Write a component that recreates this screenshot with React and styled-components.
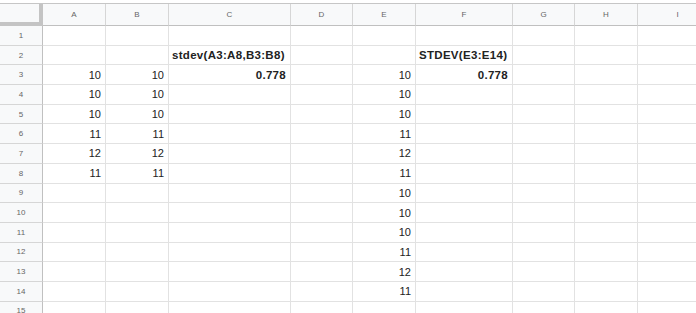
import styled, { createGlobalStyle } from "styled-components";

const GlobalStyle = createGlobalStyle`
  html, body {
    margin: 0;
    padding: 0;
    background: #fff;
  }
  body {
    font-family: "Liberation Sans", Arial, sans-serif;
  }
`;

const columns = [
  { name: "A", width: 63 },
  { name: "B", width: 63 },
  { name: "C", width: 122 },
  { name: "D", width: 62 },
  { name: "E", width: 63 },
  { name: "F", width: 97 },
  { name: "G", width: 62 },
  { name: "H", width: 63 },
  { name: "I", width: 80 },
];

const cells = {
  "A3": { v: "10" }, "B3": { v: "10" },
  "A4": { v: "10" }, "B4": { v: "10" },
  "A5": { v: "10" }, "B5": { v: "10" },
  "A6": { v: "11" }, "B6": { v: "11" },
  "A7": { v: "12" }, "B7": { v: "12" },
  "A8": { v: "11" }, "B8": { v: "11" },
  "C2": { v: "stdev(A3:A8,B3:B8)", bold: true, left: true },
  "C3": { v: "0.778", bold: true },
  "F2": { v: "STDEV(E3:E14)", bold: true, left: true },
  "F3": { v: "0.778", bold: true },
  "E3": { v: "10" }, "E4": { v: "10" }, "E5": { v: "10" },
  "E6": { v: "11" }, "E7": { v: "12" }, "E8": { v: "11" },
  "E9": { v: "10" }, "E10": { v: "10" }, "E11": { v: "10" },
  "E12": { v: "11" }, "E13": { v: "12" }, "E14": { v: "11" },
};

const rows = Array.from({ length: 15 }, (_, i) => i + 1);

const Sheet = styled.div`
  margin-top: 3px;
  border-top: 1px solid #c6c6c6;
  display: grid;
  grid-template-columns: 43px ${columns.map((c) => c.width + "px").join(" ")};
  grid-template-rows: 22px repeat(15, 19.7px);
  overflow: hidden;
  width: 696px;
`;

const Corner = styled.div`
  box-sizing: border-box;
  background: #f8f9fa;
  border-right: 4px solid #c4c4c4;
  border-bottom: 4px solid #c4c4c4;
`;

const ColHead = styled.div`
  box-sizing: border-box;
  background: #f8f9fa;
  border-right: 1px solid #d6d6d6;
  border-bottom: 1px solid #c0c0c0;
  color: #666;
  font-size: 8px;
  display: flex;
  align-items: center;
  justify-content: center;
`;

const RowHead = styled.div`
  box-sizing: border-box;
  background: #f8f9fa;
  border-right: 1px solid #c0c0c0;
  border-bottom: 1px solid #d6d6d6;
  color: #666;
  font-size: 8px;
  display: flex;
  align-items: center;
  justify-content: center;
`;

const Cell = styled.div`
  box-sizing: border-box;
  border-right: 1px solid #e2e2e2;
  border-bottom: 1px solid #e2e2e2;
  color: #222;
  font-size: ${({ $bold }) => ($bold ? "11.5px" : "11px")};
  font-weight: ${({ $bold }) => ($bold ? 700 : 400)};
  letter-spacing: ${({ $bold }) => ($bold ? "0.3px" : "0")};
  display: flex;
  align-items: center;
  justify-content: ${({ $left }) => ($left ? "flex-start" : "flex-end")};
  padding: ${({ $left }) => ($left ? "0 0 0 3px" : "0 4px 0 0")};
  white-space: nowrap;
  overflow: ${({ $left }) => ($left ? "visible" : "hidden")};
  position: relative;
  z-index: ${({ $left }) => ($left ? 1 : 0)};
`;

const App = () => {
  return (
    <>
      <GlobalStyle />
      <Sheet>
        <Corner />
        {columns.map((c) => (
          <ColHead key={c.name}>{c.name}</ColHead>
        ))}
        {rows.map((r) => (
          <>
            <RowHead key={"h" + r}>{r}</RowHead>
            {columns.map((c) => {
              const cell = cells[c.name + r];
              return (
                <Cell key={c.name + r} $bold={cell?.bold} $left={cell?.left}>
                  {cell?.v}
                </Cell>
              );
            })}
          </>
        ))}
      </Sheet>
    </>
  );
};

export default App;
